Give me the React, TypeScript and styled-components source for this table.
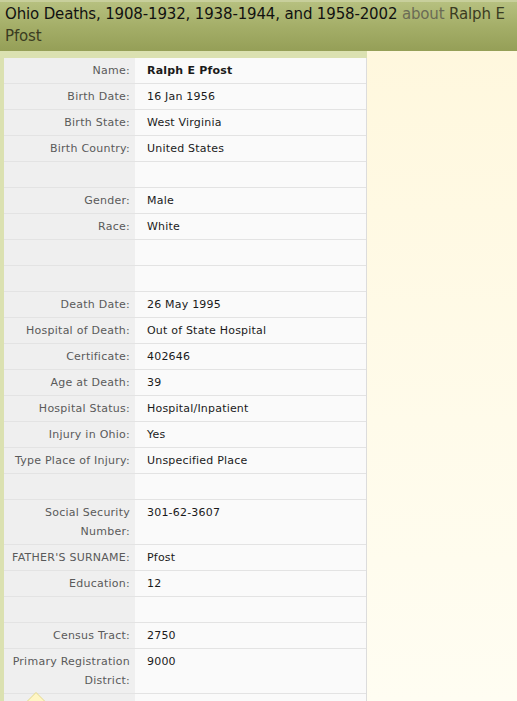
import { Fragment } from "react";
import styled, { createGlobalStyle } from "styled-components";

const GlobalStyle = createGlobalStyle`
  html, body {
    margin: 0;
    padding: 0;
  }
  body {
    font-family: "DejaVu Sans", Verdana, sans-serif;
    background: linear-gradient(180deg, #fff7dc 0%, #fffbea 60%, #fffdf2 100%);
    min-height: 701px;
  }
`;

const Page = styled.div`
  width: 517px;
  height: 701px;
  overflow: hidden;
  position: relative;
`;

const Header = styled.h1`
  margin: 0;
  padding: 1px 6px 4px 5px;
  font-size: 15px;
  font-weight: normal;
  line-height: 22px;
  letter-spacing: -0.15px;
  color: #111;
  border-top: 2px solid #c8cf9c;
  background: linear-gradient(180deg, #b6c07f 0%, #a4ae68 50%, #959f57 100%);
`;

const About = styled.span`
  color: #6a6b55;
`;

const Who = styled.span`
  color: #3b3c22;
`;

const Body = styled.div`
  border-top: 7px solid #dbe1b1;
  border-left: 4px solid #dbe1b1;
  width: 363px;
`;

const Table = styled.div`
  display: grid;
  grid-template-columns: 131px 231px;
  border-right: 1px solid #dcdcdc;
  font-size: 11px;
  line-height: 19px;
`;

const Label = styled.div`
  background: #efefef;
  color: #5a5a5a;
  text-align: right;
  padding: 3px 5px 3px 2px;
  border-bottom: 1px solid #e3e3e3;
  min-height: 19px;
  letter-spacing: 0.25px;
`;

const Value = styled.div<{ $bold?: boolean }>`
  background: #fafafa;
  color: #1a1a1a;
  padding: 3px 8px 3px 12px;
  border-bottom: 1px solid #e3e3e3;
  min-height: 19px;
  font-weight: ${(p) => (p.$bold ? "bold" : "normal")};
  letter-spacing: 0.2px;
`;

const Pointer = styled.svg`
  position: absolute;
  left: 25px;
  top: 691px;
`;

const rows: [string, string, boolean?][] = [
  ["Name:", "Ralph E Pfost", true],
  ["Birth Date:", "16 Jan 1956"],
  ["Birth State:", "West Virginia"],
  ["Birth Country:", "United States"],
  ["", ""],
  ["Gender:", "Male"],
  ["Race:", "White"],
  ["", ""],
  ["", ""],
  ["Death Date:", "26 May 1995"],
  ["Hospital of Death:", "Out of State Hospital"],
  ["Certificate:", "402646"],
  ["Age at Death:", "39"],
  ["Hospital Status:", "Hospital/Inpatient"],
  ["Injury in Ohio:", "Yes"],
  ["Type Place of Injury:", "Unspecified Place"],
  ["", ""],
  ["Social Security Number:", "301-62-3607"],
  ["FATHER'S SURNAME:", "Pfost"],
  ["Education:", "12"],
  ["", ""],
  ["Census Tract:", "2750"],
  ["Primary Registration District:", "9000"],
  ["", ""],
];

export default function App() {
  return (
    <Page>
      <GlobalStyle />
      <Header>
        Ohio Deaths, 1908-1932, 1938-1944, and 1958-2002 <About>about</About>{" "}
        <Who>Ralph E Pfost</Who>
      </Header>
      <Body>
        <Table>
          {rows.map(([label, value, bold], i) => (
            <Fragment key={i}>
              <Label>{label}</Label>
              <Value $bold={bold}>{value}</Value>
            </Fragment>
          ))}
        </Table>
      </Body>
      <Pointer width="22" height="12" viewBox="0 0 22 12">
        <path d="M1 11.5 L11 1.5 L21 11.5 Z" fill="#fff6c4" stroke="#e2d88a" strokeWidth="1" />
      </Pointer>
    </Page>
  );
}
